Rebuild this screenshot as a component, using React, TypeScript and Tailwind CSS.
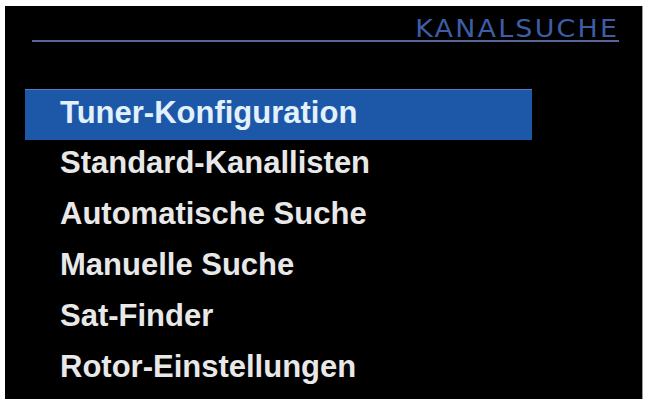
import React from "react";

const items = [
  "Tuner-Konfiguration",
  "Standard-Kanallisten",
  "Automatische Suche",
  "Manuelle Suche",
  "Sat-Finder",
  "Rotor-Einstellungen",
];

export default function App() {
  return (
    <div className="w-[646px] h-[401px] bg-white pt-[6px] pl-[5px] pr-[3px] pb-[2px]">
      <div className="w-full h-full bg-black border-r border-[#9a9a9a] flex flex-col">
        <div className="pt-[12px] pr-[23px] flex justify-end">
          <span
            className="inline-block origin-right scale-x-[1.12] text-[24px] leading-[22px] tracking-[2px] text-[#3d5ea6] font-normal"
            style={{ fontFamily: '"DejaVu Sans", sans-serif' }}
          >
            KANALSUCHE
          </span>
        </div>
        <div className="mt-0 ml-[27px] mr-[23px] h-[2px] bg-[#56669a]" />
        <div className="mt-[47px] flex flex-col">
          {items.map((t, i) => (
            <div
              key={t}
              className={
                i === 0
                  ? "ml-[20px] w-[507px] h-[51px] flex items-center pb-[6px] pl-[35px] bg-[#1d58a8] border-t border-[#4f7fc2] text-[#e2f1fc]"
                  : "ml-[20px] w-[507px] h-[51px] flex items-center pb-[6px] pl-[35px] text-[#e8e8e8]"
              }
            >
              <span
                className="text-[31px] font-bold leading-none"
                style={{ fontFamily: '"Liberation Sans", Arial, sans-serif' }}
              >
                {t}
              </span>
            </div>
          ))}
        </div>
      </div>
    </div>
  );
}
